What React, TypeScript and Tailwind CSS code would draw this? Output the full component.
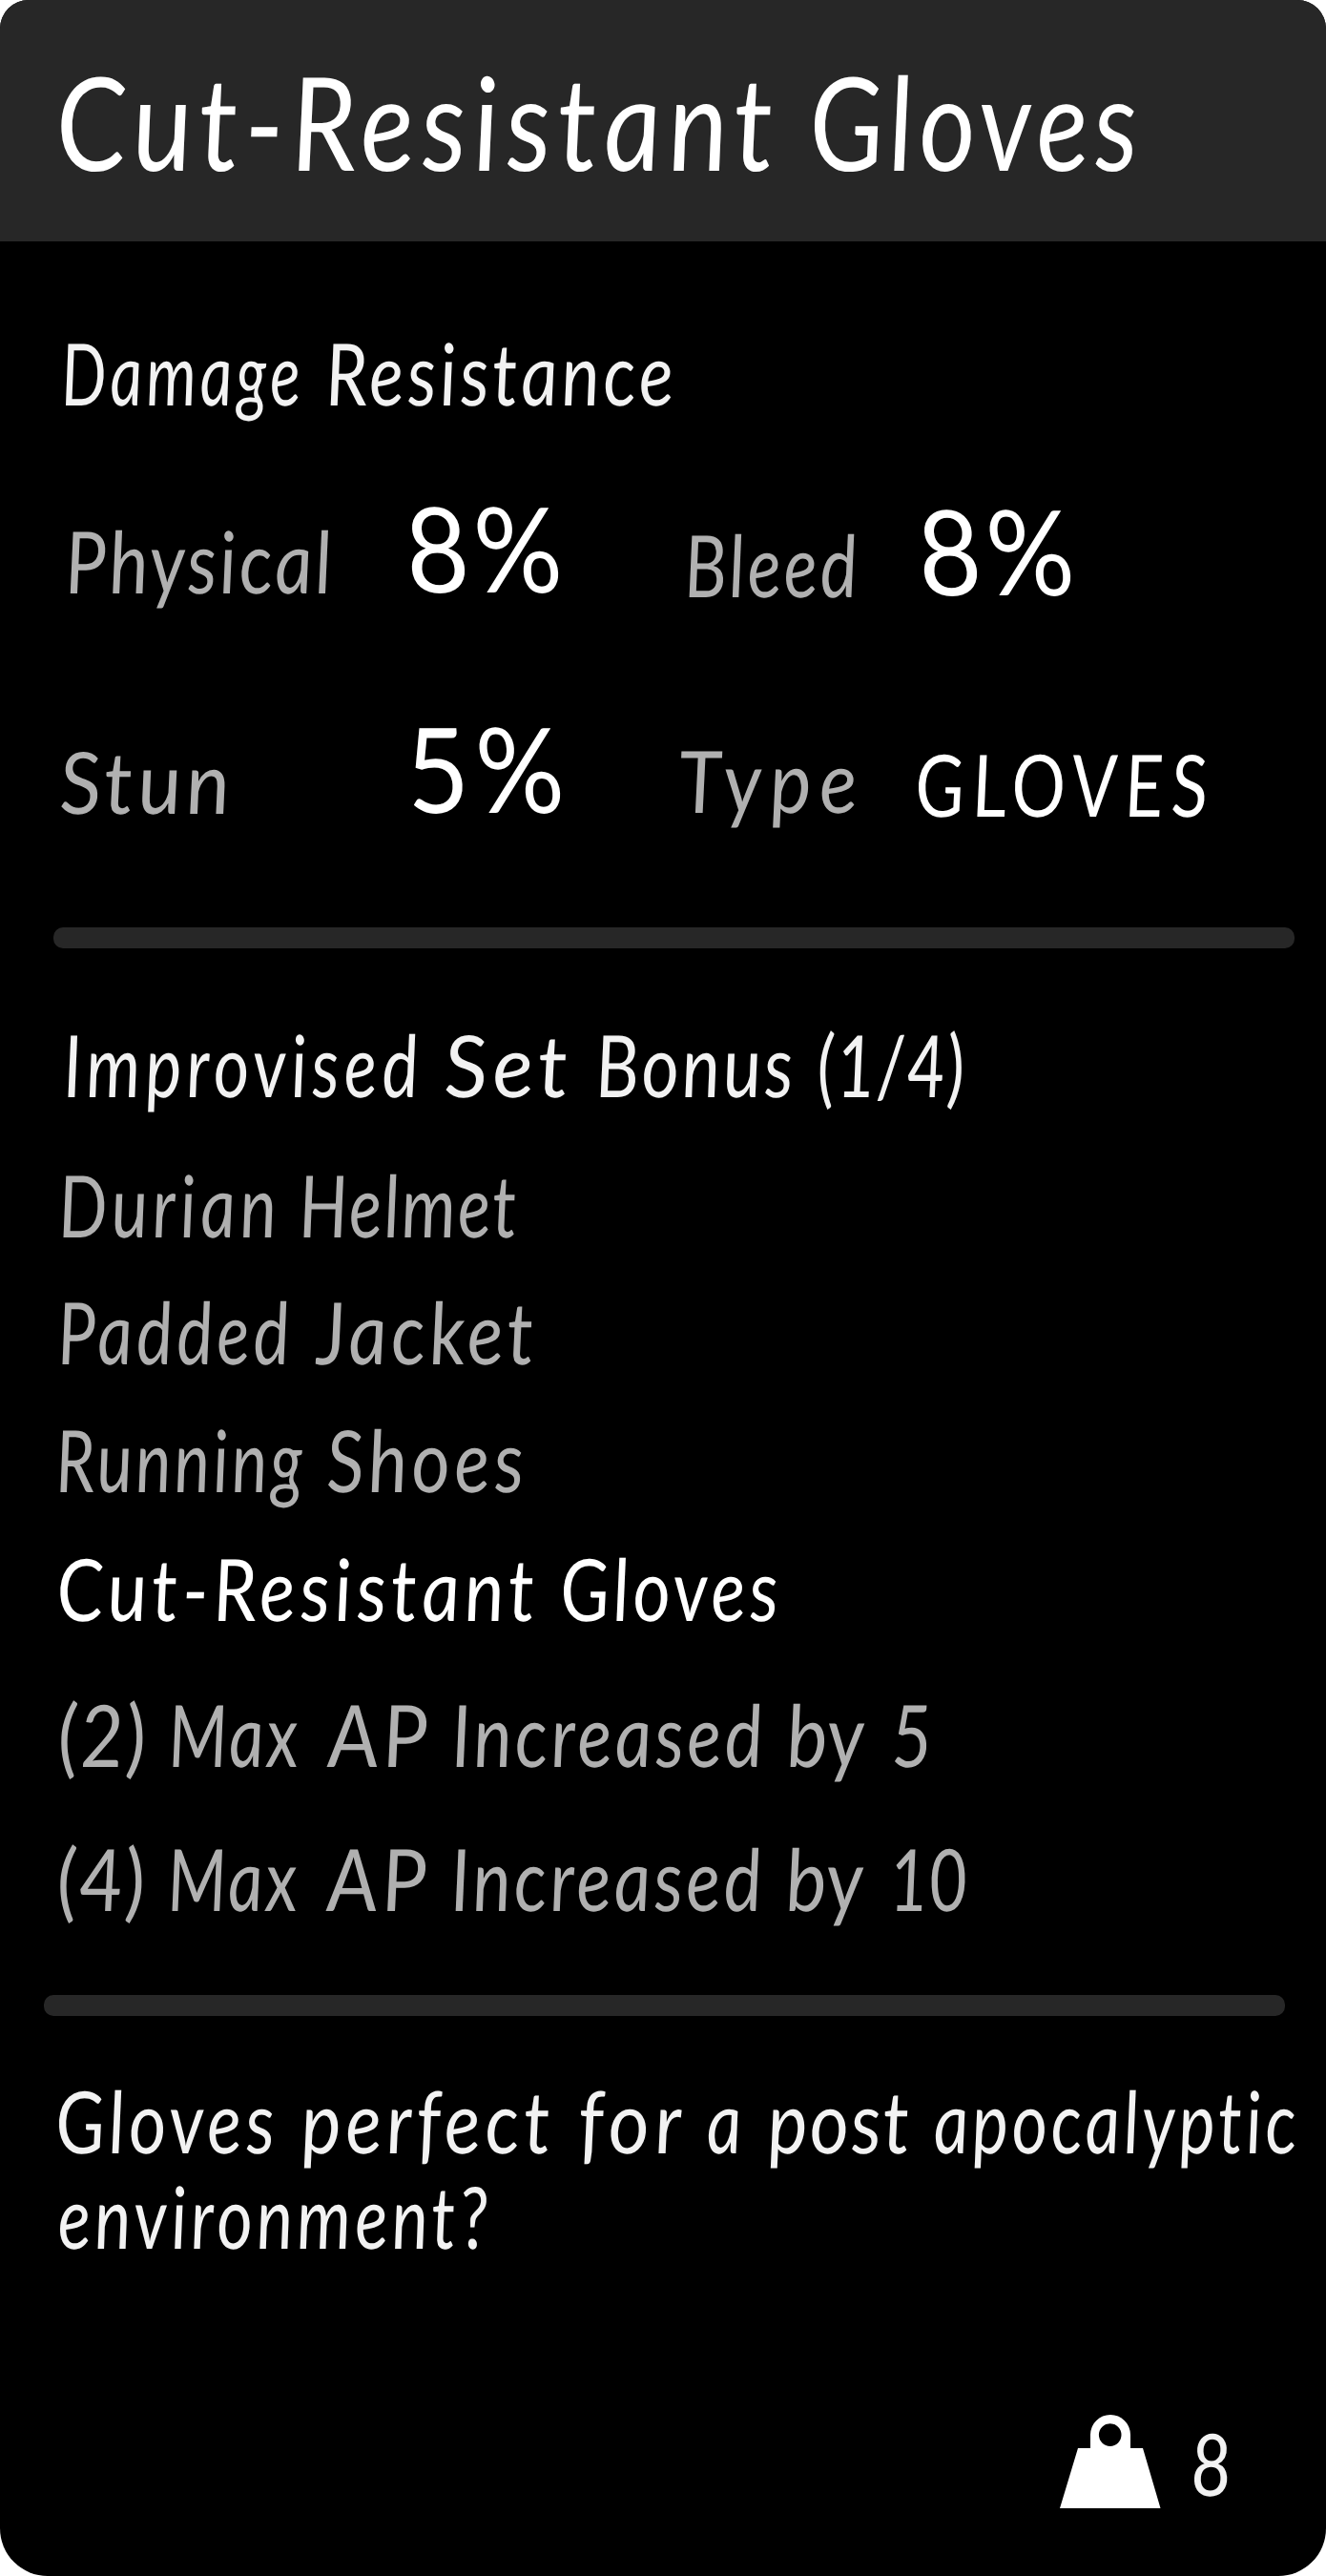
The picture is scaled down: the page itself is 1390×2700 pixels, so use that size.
import { useLayoutEffect, useRef, useState } from "react";

type WordSpec = { text: string; x: number; w: number; scale?: number };

/* Condensed calligraphic word whose tracking is adjusted to fill its measure. */
function Word({ text, width, gap, scale }: { text: string; width: number; gap: number; scale: number }) {
  const ref = useRef<HTMLSpanElement>(null);
  const [tracking, setTracking] = useState(0);

  useLayoutEffect(() => {
    const el = ref.current;
    if (!el || text.length < 2) return;
    const previous = el.style.letterSpacing;
    el.style.letterSpacing = "0px";
    const natural = el.offsetWidth;
    el.style.letterSpacing = previous;
    setTracking((width / scale - natural) / (text.length - 1));
  }, [text, width, scale]);

  return (
    <span className="block shrink-0" style={{ width, marginLeft: gap }}>
      <span
        ref={ref}
        className="inline-block origin-left whitespace-pre"
        style={{ letterSpacing: tracking, transform: `scaleX(${scale}) skewX(4deg)` }}
      >
        {text}
      </span>
    </span>
  );
}

function Line({ words, className }: { words: WordSpec[]; className: string }) {
  return (
    <p className={`flex whitespace-nowrap leading-none ${className}`}>
      {words.map((word, i) => {
        const previousEnd = i === 0 ? 0 : words[i - 1].x + words[i - 1].w;
        return (
          <Word key={word.x} text={word.text} width={word.w} gap={word.x - previousEnd} scale={word.scale ?? 0.8} />
        );
      })}
    </p>
  );
}

function WeightIcon() {
  return (
    <svg className="h-[98px] w-[106px] shrink-0" viewBox="0 0 106 98" fill="#ffffff">
      <path
        fillRule="evenodd"
        d="M32 35V21a21 21 0 0 1 42 0v14h13l18.500 63H0L19 35ZM52.700 9.300a11.800 11.800 0 1 0 0 23.600a11.800 11.800 0 1 0 0-23.600Z"
      />
    </svg>
  );
}

export default function App() {
  return (
    <main className="h-[2700px] w-[1390px] bg-white">
      <article className="flex h-[2700px] w-[1390px] flex-col overflow-hidden rounded-t-[30px] rounded-b-[50px] bg-black font-['Lato',sans-serif] text-[90px] text-[#f2f2f2] italic">
        <header className="h-[253px] shrink-0 bg-[#272727] pt-[59px]">
          <Line
            className="h-[136px] text-[136px] text-white"
            words={[
              { text: "Cut-Resistant", x: 58, w: 753, scale: 0.87 },
              { text: "Gloves", x: 848, w: 344, scale: 0.84 },
            ]}
          />
        </header>

        <Line
          className="mt-[92px] h-[90px]"
          words={[
            { text: "Damage", x: 64, w: 250, scale: 0.74 },
            { text: "Resistance", x: 341, w: 364, scale: 0.84 },
          ]}
        />

        <section className="mt-[76px] flex h-[124px] shrink-0 items-start">
          <Line
            className="mt-[31px] w-[425px] text-[#b0b0b0]"
            words={[{ text: "Physical", x: 68, w: 279, scale: 0.86 }]}
          />
          <Line
            className="w-[292px] text-[124px] text-white not-italic"
            words={[{ text: "8%", x: 0, w: 163, scale: 0.92 }]}
          />
          <Line className="mt-[35px] w-[245px] text-[#b0b0b0]" words={[{ text: "Bleed", x: 0, w: 181, scale: 0.82 }]} />
          <Line
            className="mt-[3px] text-[124px] text-white not-italic"
            words={[{ text: "8%", x: 0, w: 163, scale: 0.92 }]}
          />
        </section>

        <section className="mt-[107px] flex h-[124px] shrink-0 items-start">
          <Line
            className="mt-[31px] w-[425px] text-[#b0b0b0]"
            words={[{ text: "Stun", x: 62, w: 178, scale: 0.96 }]}
          />
          <Line
            className="w-[286px] text-[124px] text-white not-italic"
            words={[{ text: "5%", x: 0, w: 165, scale: 0.92 }]}
          />
          <Line className="mt-[30px] w-[250px] text-[#b0b0b0]" words={[{ text: "Type", x: 0, w: 187, scale: 0.92 }]} />
          <Line className="mt-[34px] text-white" words={[{ text: "GLOVES", x: -2, w: 307, scale: 0.84 }]} />
        </section>

        <div className="mt-[106px] ml-[56px] h-[22px] w-[1301px] shrink-0 rounded-[10px] bg-[#272727]" />

        <Line
          className="mt-[76px] h-[90px]"
          words={[
            { text: "Improvised", x: 66, w: 372 },
            { text: "Set", x: 465, w: 130, scale: 1 },
            { text: "Bonus", x: 624, w: 207, scale: 0.84 },
            { text: "(1/4)", x: 856, w: 155 },
          ]}
        />

        <div className="text-[#b0b0b0]">
          <Line
            className="mt-[57px] h-[90px]"
            words={[
              { text: "Durian", x: 61, w: 228 },
              { text: "Helmet", x: 313, w: 228 },
            ]}
          />
          <Line
            className="mt-[43px] h-[90px]"
            words={[
              { text: "Padded", x: 60, w: 243 },
              { text: "Jacket", x: 330, w: 229, scale: 0.88 },
            ]}
          />
          <Line
            className="mt-[44px] h-[90px]"
            words={[
              { text: "Running", x: 58, w: 259, scale: 0.78 },
              { text: "Shoes", x: 342, w: 206, scale: 0.86 },
            ]}
          />
          <Line
            className="mt-[45px] h-[90px] text-white"
            words={[
              { text: "Cut-Resistant", x: 59, w: 501, scale: 0.87 },
              { text: "Gloves", x: 587, w: 228, scale: 0.84 },
            ]}
          />
          <Line
            className="mt-[63px] h-[90px]"
            words={[
              { text: "(2)", x: 60, w: 93, scale: 0.92 },
              { text: "Max", x: 176, w: 136, scale: 0.8 },
              { text: "AP", x: 343, w: 105, scale: 0.94 },
              { text: "Increased", x: 473, w: 326, scale: 0.84 },
              { text: "by", x: 824, w: 82, scale: 0.9 },
              { text: "5", x: 933, w: 44, scale: 0.85 },
            ]}
          />
          <Line
            className="mt-[61px] h-[90px]"
            words={[
              { text: "(4)", x: 59, w: 93, scale: 0.92 },
              { text: "Max", x: 175, w: 136, scale: 0.8 },
              { text: "AP", x: 342, w: 105, scale: 0.94 },
              { text: "Increased", x: 472, w: 326, scale: 0.84 },
              { text: "by", x: 823, w: 82, scale: 0.9 },
              { text: "10", x: 931, w: 83 },
            ]}
          />
        </div>

        <div className="mt-[78px] ml-[46px] h-[22px] w-[1301px] shrink-0 rounded-[10px] bg-[#272727]" />

        <div className="mt-[64px]">
          <Line
            className="h-[90px]"
            words={[
              { text: "Gloves", x: 58, w: 229, scale: 0.84 },
              { text: "perfect", x: 315, w: 262, scale: 0.88 },
              { text: "for", x: 606, w: 108, scale: 0.92 },
              { text: "a", x: 740, w: 34, scale: 0.8 },
              { text: "post", x: 804, w: 149, scale: 0.88 },
              { text: "apocalyptic", x: 978, w: 380, scale: 0.8 },
            ]}
          />
          <Line className="mt-[10px] h-[90px]" words={[{ text: "environment?", x: 60, w: 452 }]} />
        </div>

        <footer className="mt-[164px] flex items-start pl-[1111px]">
          <WeightIcon />
          <Line className="mt-[5px] ml-[30px]" words={[{ text: "8", x: 0, w: 44, scale: 0.85 }]} />
        </footer>
      </article>
    </main>
  );
}
